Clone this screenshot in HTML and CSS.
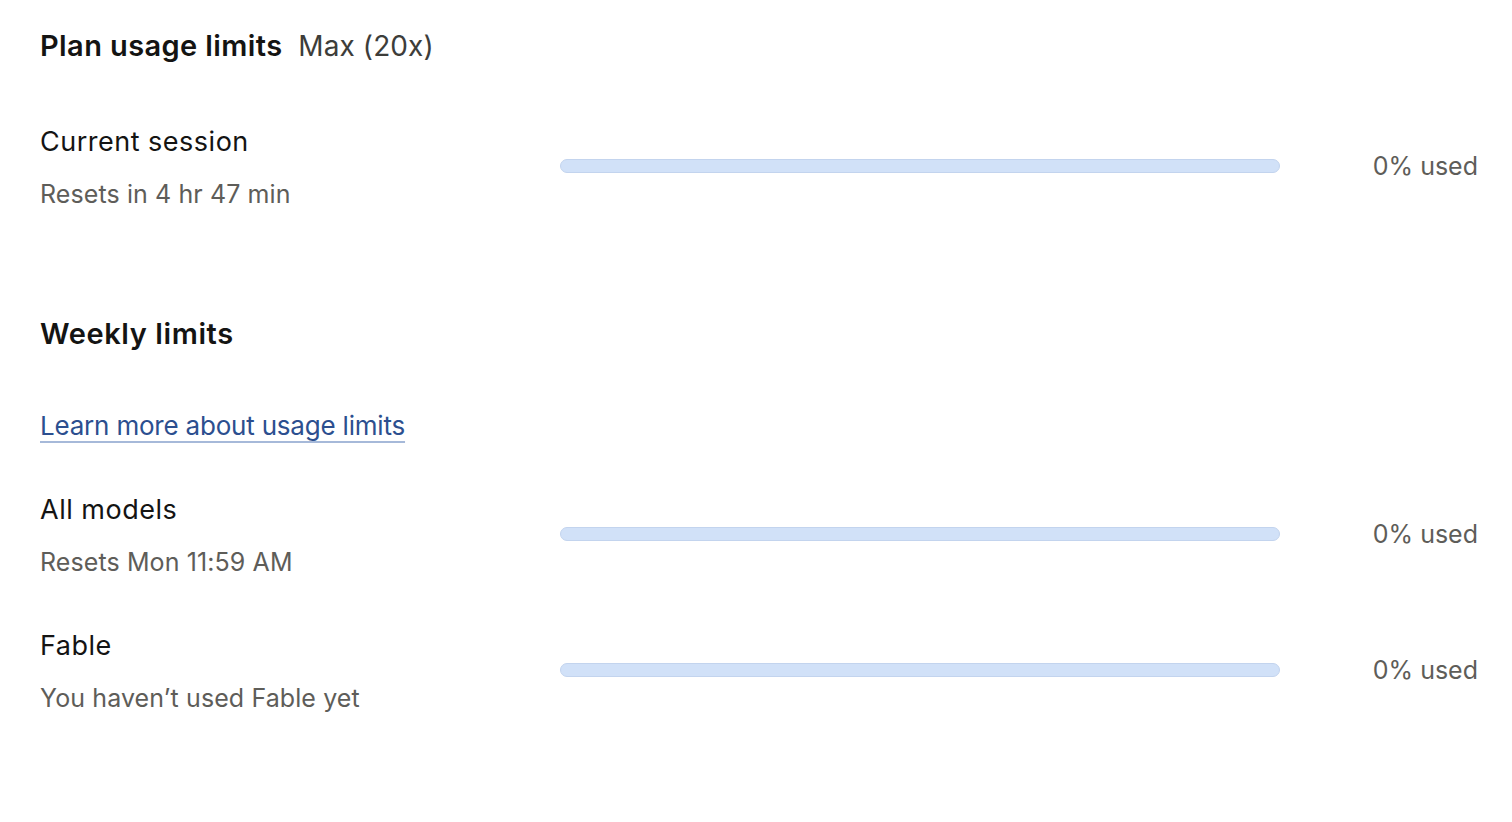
FILE: index.html
```html
<!DOCTYPE html>
<html lang="en">
<head>
  <meta charset="UTF-8">
  <title>Usage</title>
  <link rel="stylesheet" href="styles.css">
</head>
<body>

  <div class="page">
    <h1 class="title">Plan usage limits <span class="plan">Max (20x)</span></h1>

    <div class="usage-row first">
      <div class="info">
        <div class="label">Current session</div>
        <div class="sub">Resets in 4 hr 47 min</div>
      </div>
      <div class="bar"><div class="fill" style="width: 0%"></div></div>
      <div class="used">0% used</div>
    </div>

    <h2 class="section">Weekly limits</h2>

    <a class="learn" href="#">Learn more about usage limits</a>

    <div class="usage-row">
      <div class="info">
        <div class="label">All models</div>
        <div class="sub">Resets Mon 11:59 AM</div>
      </div>
      <div class="bar"><div class="fill" style="width: 0%"></div></div>
      <div class="used">0% used</div>
    </div>

    <div class="usage-row">
      <div class="info">
        <div class="label">Fable</div>
        <div class="sub">You haven’t used Fable yet</div>
      </div>
      <div class="bar"><div class="fill" style="width: 0%"></div></div>
      <div class="used">0% used</div>
    </div>
  </div>

</body>
</html>
```

FILE: styles.css
```css
body {
  margin: 0;
  padding: 0;
  background-color: #ffffff;
  font-family: Inter, "Noto Sans", sans-serif;
  color: #141413;
}

.page {
  padding: 26px 34px 40px 40px;
}

.title {
  margin: 0;
  font-size: 29px;
  line-height: 40px;
  font-weight: 600;
  letter-spacing: 0.4px;
}

.plan {
  margin-left: 8px;
  font-size: 28px;
  font-weight: 400;
  color: #3d3d3a;
  letter-spacing: 0.1px;
}

.usage-row {
  display: grid;
  grid-template-columns: 520px 720px 1fr;
  align-items: center;
  margin-top: 48px;
}

.usage-row.first {
  margin-top: 58px;
}

.info {
  display: flex;
  flex-direction: column;
  gap: 16px;
}

.label {
  font-size: 27px;
  line-height: 36px;
  letter-spacing: 0.5px;
}

.sub {
  font-size: 25px;
  line-height: 36px;
  color: #5e5d59;
  letter-spacing: 0.1px;
}

.bar {
  height: 12px;
  margin-bottom: 4px;
  background-color: #d1e1f8;
  border: 1px solid #c3d4ee;
  border-radius: 8px;
  overflow: hidden;
}

.fill {
  height: 100%;
  background-color: #2c64c8;
}

.used {
  margin-bottom: 4px;
  text-align: right;
  font-size: 25px;
  color: #5e5d59;
}

.section {
  margin: 102px 0 0;
  font-size: 29px;
  line-height: 40px;
  font-weight: 600;
  letter-spacing: 0.6px;
}

.learn {
  display: inline-block;
  margin-top: 54px;
  font-size: 26px;
  line-height: 36px;
  color: #2c4f8f;
  text-decoration: underline;
  text-decoration-color: #a6b9d9;
  text-underline-offset: 6px;
  text-decoration-thickness: 2px;
  letter-spacing: -0.2px;
}
```
